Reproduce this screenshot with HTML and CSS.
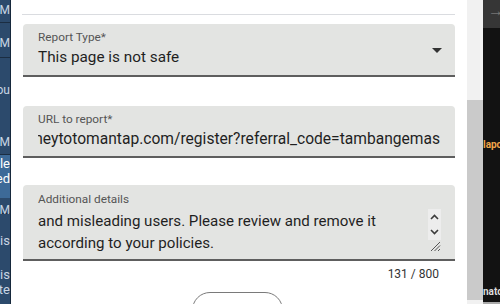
FILE: index.html
```html
<!DOCTYPE html>
<html lang="en">
<head>
    <meta charset="UTF-8">
    <meta name="viewport" content="width=device-width, initial-scale=1.0">
    <title>Report</title>
    <link rel="stylesheet" href="styles.css">
</head>
<body>
    <div class="screen">
        <div class="sidebar">
            <div class="side-row ra">
                <div class="line t1">10:21 AM</div>
            </div>
            <div class="side-row rb">
                <div class="line t2">10:22 AM</div>
            </div>
            <div class="side-row rc">
                <div class="line t3">Tambang you</div>
                <div class="line t4">10:24 AM</div>
            </div>
            <div class="side-row rd">
                <div class="hl">
                    <div class="line t5">Google</div>
                    <div class="line">Reported</div>
                </div>
                <div class="line t6">10:31 AM</div>
            </div>
            <div class="side-row re">
                <div class="line t7">Is this</div>
                <div class="line t8">phis</div>
                <div class="line">site</div>
            </div>
        </div>

        <div class="dialog">
            <div class="rule"></div>

            <div class="field select">
                <div class="label">Report Type*</div>
                <div class="value">This page is not safe</div>
                <span class="caret"></span>
            </div>

            <div class="field url">
                <div class="label">URL to report*</div>
                <div class="value clip"><span>moneytotomantap.com/register?referral_code=tambangemas</span></div>
            </div>

            <div class="field details">
                <div class="label">Additional details</div>
                <div class="text">
                    <p>and misleading users. Please review and remove it</p>
                    <p>according to your policies.</p>
                </div>
                <div class="spin">
                    <svg width="13" height="31" viewBox="0 0 13 31">
                        <path d="M3 10 L6.5 6.5 L10 10" fill="none" stroke="#3c3c3c" stroke-width="1.6"/>
                        <path d="M3 21 L6.5 24.5 L10 21" fill="none" stroke="#3c3c3c" stroke-width="1.6"/>
                    </svg>
                </div>
                <svg class="grip" width="12" height="12" viewBox="0 0 12 12">
                    <path d="M11 2 L2 11 M11 5.5 L5.5 11 M11 9 L9 11" stroke="#555" stroke-width="1"/>
                </svg>
            </div>

            <div class="counter">131 / 800</div>

            <div class="actions">
                <button class="submit">Submit</button>
            </div>
        </div>

        <div class="scrollbar">
            <div class="thumb"></div>
        </div>

        <div class="backdrop">
            <div class="topbar">&#8594;</div>
            <div class="peek p1">lapo</div>
            <div class="peek p2">nato</div>
            <div class="edge"></div>
        </div>
    </div>
</body>
</html>
```

FILE: styles.css
```css
* {box-sizing: border-box;}

body {
margin: 0;
width: 500px;
height: 304px;
overflow: hidden;
font-family: Roboto, "Noto Sans", Arial, sans-serif;
background: #fff;
}

.screen {
display: flex;
height: 304px;
}

/* chat list behind the dialog */
.sidebar {
width: 11px;
flex: none;
background: #2c4a6c;
border-right: 1px solid #16283b;
overflow: hidden;
color: #c9d6e4;
font-size: 12px;
}

.side-row {
border-bottom: 1px solid #1b2d42;
}

.line {
display: flex;
justify-content: flex-end;
white-space: nowrap;
line-height: 15px;
}

.ra {height: 23px; padding-top: 3px;}
.rb {height: 35px; padding-top: 13px;}
.rc {height: 97px; padding-top: 25px;}
.t4 {margin-top: 37px;}
.rd {height: 59px;}
.hl {height: 43px; background: #3d6a98; color: #fff; padding-top: 1px; font-size: 13px;}
.t6 {margin-top: 5px;}
.re {height: 90px; padding-top: 19px; font-size: 13px; border: none;}
.t8 {margin-top: 19px;}

.dialog {
width: 456px;
flex: none;
padding: 14px 12px 0 12px;
background: #fff;
}

.rule {
height: 1px;
background: #dadce0;
margin: 0 0 9px -1px;
}

.field {
position: relative;
background: #e3e4e2;
border-radius: 4px 4px 0 0;
border-bottom: 2px solid #5e5e5e;
padding: 5px 15px 6px 15px;
color: #1f1f1f;
}

.label {
font-size: 11.8px;
line-height: 16px;
color: #555;
}

.value {
font-size: 15.3px;
line-height: 24px;
white-space: nowrap;
}

.select {
height: 53px;
}

.caret {
position: absolute;
right: 13px;
top: 24px;
width: 0;
height: 0;
border-left: 5px solid transparent;
border-right: 5px solid transparent;
border-top: 5px solid #333;
}

.url {
height: 52px;
margin-top: 29px;
}

.clip {
display: flex;
justify-content: flex-end;
overflow: hidden;
font-size: 15.6px;
}

.details {
height: 76px;
margin-top: 27px;
padding-top: 6px;
padding-right: 40px;
}

.text {
margin-top: 3px;
font-size: 15.1px;
line-height: 22px;
}

.text p {
margin: 0;
white-space: nowrap;
}

.spin {
position: absolute;
right: 14px;
top: 24px;
width: 13px;
height: 31px;
background: #ededed;
}

.grip {
position: absolute;
right: 14px;
bottom: 7px;
}

.counter {
text-align: right;
font-size: 12px;
color: #333;
padding: 5px 16px 0 0;
line-height: 16px;
}

.actions {
display: flex;
justify-content: center;
padding-top: 10px;
}

.submit {
width: 91px;
height: 36px;
border: 1px solid #7a7a7a;
border-radius: 18px;
background: #fff;
color: #1a73e8;
font-family: Roboto, Arial, sans-serif;
font-size: 14px;
font-weight: 500;
margin-left: -4px;
}

.scrollbar {
width: 16px;
flex: none;
background: #f1f1f1;
padding-top: 100px;
}

.thumb {
height: 200px;
background: #cacaca;
}

.backdrop {
flex: 1;
position: relative;
background: #121212;
overflow: hidden;
font-size: 10px;
}

.topbar {
height: 28px;
background: #363636;
color: #777;
font-size: 16px;
line-height: 22px;
padding-left: 5px;
}

.peek {
white-space: nowrap;
font-weight: bold;
}

.p1 {
margin-top: 111px;
color: #f0a64a;
}

.p2 {
margin-top: 136px;
color: #dcdcdc;
}

.edge {
position: absolute;
left: 0;
bottom: 0;
width: 100%;
height: 2px;
background: #aaa;
}
```
